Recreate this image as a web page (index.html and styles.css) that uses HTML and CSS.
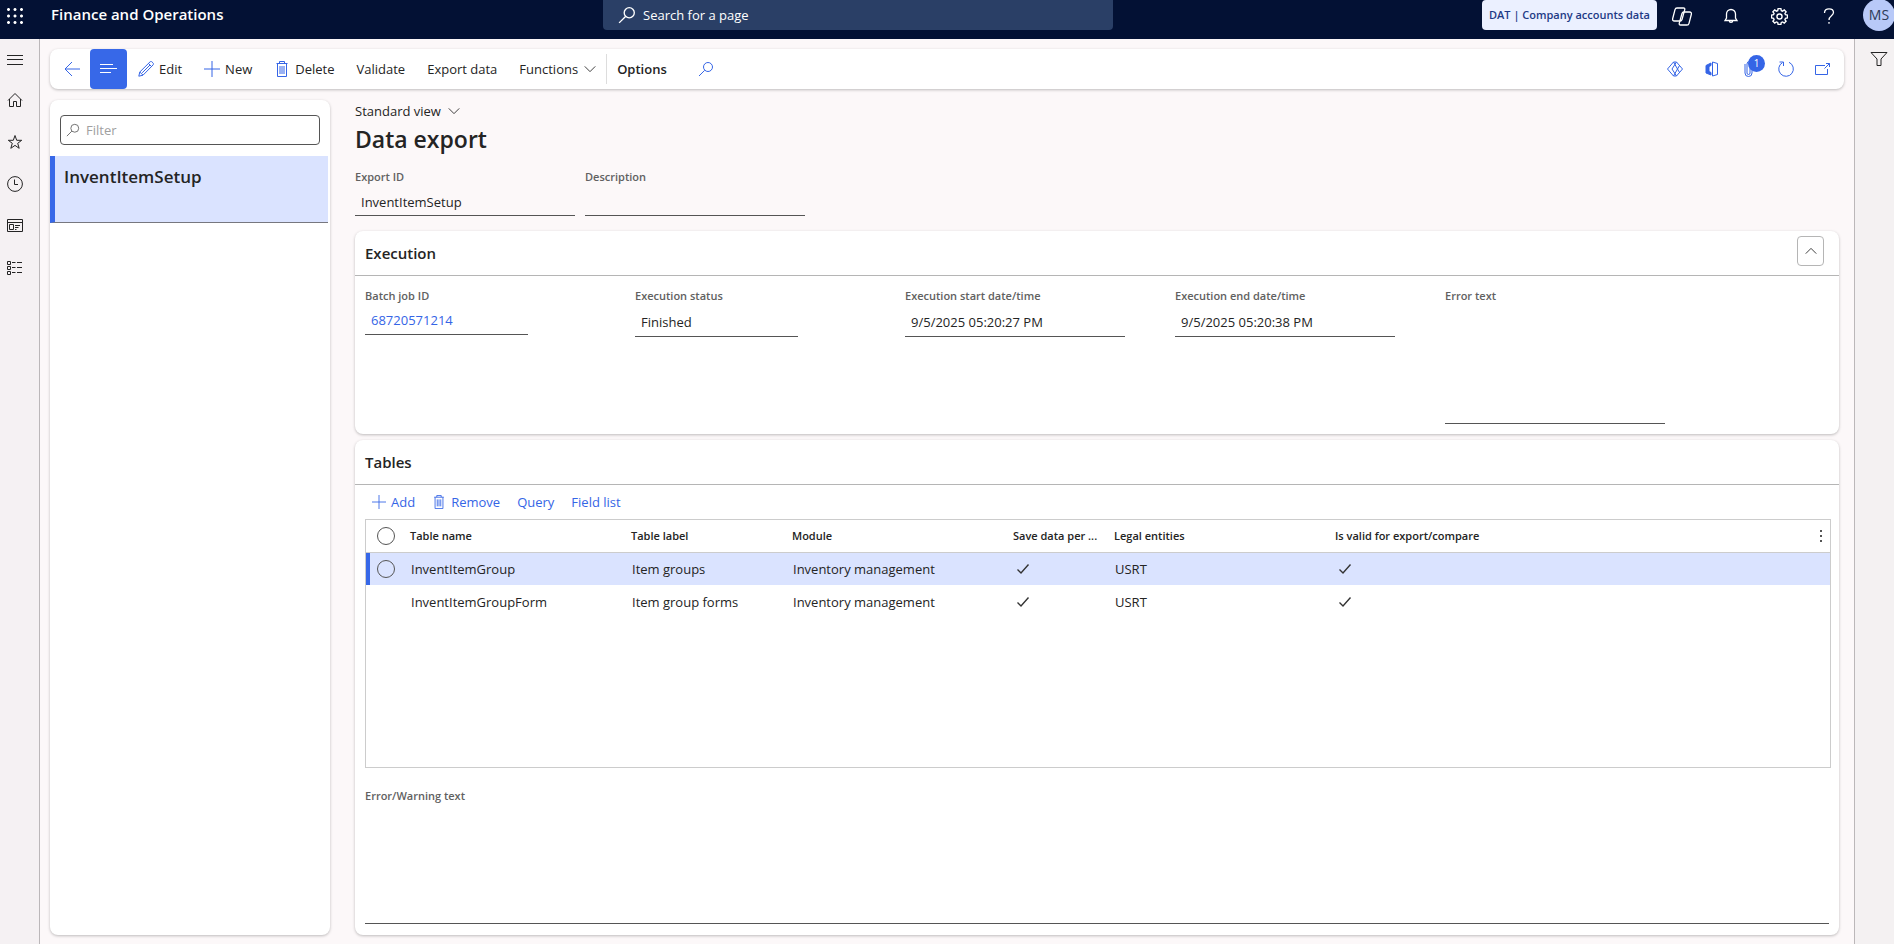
FILE: index.html
```html
<!DOCTYPE html>
<html lang="en">

<head>
    <meta charset="utf-8">
    <meta name="viewport" content="width=device-width, initial-scale=1.0">
    <title>Data export -- Finance and Operations</title>
    <link rel="stylesheet" href="styles.css">
</head>

<body>
    <!-- shared icons -->
    <svg class="defs" width="0" height="0">
        <symbol id="i-search" viewBox="0 0 16 16"><circle cx="10" cy="6" r="4.500"/><path d="M6.700 9.300L1 15"/></symbol>
        <symbol id="i-down" viewBox="0 0 16 16"><path d="M2 5l6 6 6-6"/></symbol>
        <symbol id="i-plus" viewBox="0 0 16 16"><path d="M8 0v16M0 8h16"/></symbol>
        <symbol id="i-trash" viewBox="0 0 16 16"><path d="M2.500 2.500h11M5.500 2.500v-2h5v2M3.500 2.500v13h9v-13M6 5v8M8 5v8M10 5v8"/></symbol>
        <symbol id="i-check" viewBox="0 0 16 16"><path d="M2.500 8.500l3.500 3.500L13.500 3.500"/></symbol>
    </svg>

    <header class="topbar">
        <button class="icon-btn waffle" aria-label="App launcher">
            <svg width="16" height="16" viewBox="0 0 16 16"><path d="M0 1l1-1h1l1 1v1l-1 1H1l-1-1zM6.500 1l1-1h1l1 1v1l-1 1h-1l-1-1zM13 1l1-1h1l1 1v1l-1 1h-1l-1-1zM0 7.500l1-1h1l1 1v1l-1 1H1l-1-1zM6.500 7.500l1-1h1l1 1v1l-1 1h-1l-1-1zM13 7.500l1-1h1l1 1v1l-1 1h-1l-1-1zM0 14l1-1h1l1 1v1l-1 1H1l-1-1zM6.500 14l1-1h1l1 1v1l-1 1h-1l-1-1zM13 14l1-1h1l1 1v1l-1 1h-1l-1-1z"/></svg>
        </button>
        <div class="brand">Finance and Operations</div>
        <label class="search">
            <svg width="18" height="18"><use href="#i-search"/></svg>
            <input type="text" placeholder="Search for a page" aria-label="Search for a page">
        </label>
        <div class="top-actions">
            <button class="company">DAT | Company accounts data</button>
            <button class="icon-btn" aria-label="Copilot">
                <svg class="bold" width="20" height="19" viewBox="0 0 20 19"><path id="leaf" d="M5 1h6.500c1 0 1.500.7 1.200 1.800L10 12.500c-.3 1-1 1.500-2 1.500H2.500C1 14 .3 13 .7 11.500L3 2.700C3.300 1.600 4 1 5 1z"/><use href="#leaf" transform="rotate(180 10 9.500)"/></svg>
            </button>
            <button class="icon-btn" aria-label="Notifications">
                <svg class="bold" width="16" height="16" viewBox="0 0 16 16"><path d="M2 12.500h12l-1.500-2.500V6a4.500 4.500 0 0 0-9 0v4zM6.300 12.700a1.700 1.700 0 0 0 3.400 0"/></svg>
            </button>
            <button class="icon-btn" aria-label="Settings">
                <svg class="bold" width="17" height="17" viewBox="0 0 16 16"><path d="M6.700.6h2.600l.4 1.900 1.200.5 1.600-1.100 1.700 1.700L13.100 5.200l.5 1.100 1.900.4v2.600l-1.900.4-.5 1.200 1.100 1.600-1.700 1.700-1.600-1.100-1.200.5-.4 1.900H6.700l-.4-1.900-1.200-.5-1.600 1.100-1.700-1.700 1.100-1.600-.5-1.200-1.900-.4V6.700l1.900-.4.5-1.100-1.100-1.600 1.700-1.700L5.100 3l1.200-.5z"/><circle cx="8" cy="8" r="2.400"/></svg>
            </button>
            <button class="icon-btn" aria-label="Help">
                <svg class="bold" width="16" height="16" viewBox="0 0 16 16"><path d="M3.500 5C3.500 2.200 5.400.8 8 .8s4.500 1.400 4.500 3.700C12.500 7.800 8 7.800 8 12M8 14v1.800"/></svg>
            </button>
            <button class="avatar">MS</button>
        </div>
    </header>

    <div class="shell">
        <nav class="rail">
            <a href="#" aria-label="Expand navigation"><svg width="16" height="16" viewBox="0 0 16 16"><path d="M0 3.500h16M0 7.500h16M0 12.500h16"/></svg></a>
            <a href="#" aria-label="Home"><svg width="16" height="16" viewBox="0 0 16 16"><path d="M1 8.500l7-7 7 7M2.500 7v7.500h4v-5h3v5h4V7"/></svg></a>
            <a href="#" aria-label="Favorites"><svg width="16" height="16" viewBox="0 0 16 16"><path d="M8 1.500l1.700 4.800h5L10.700 9.300l1.500 5L8 11.400l-4.200 2.900 1.500-5L1.300 6.300h5z"/></svg></a>
            <a href="#" aria-label="Recent"><svg width="16" height="16" viewBox="0 0 16 16"><circle cx="8" cy="8" r="7.400"/><path d="M7.500 3.500v5h3.500"/></svg></a>
            <a href="#" aria-label="Workspaces"><svg width="16" height="16" viewBox="0 0 16 16"><path d="M.500 1.500h15v12H.500zM.500 4.500h15M2.500 6.500h4v5h-4zM8 7.500h5M8 9.500h3.500M8 11.500h1.500"/></svg></a>
            <a href="#" aria-label="Modules"><svg width="16" height="16" viewBox="0 0 16 16"><path d="M.500 1.500h3v3h-3zM.500 6.500h3v3h-3zM.500 11.500h3v3h-3zM5 2.500h3.500M10 2.500h5M5 7.500h3.500M10 7.500h5M5 12.500h3.500M10 12.500h5"/></svg></a>
        </nav>

        <main class="page">
            <div class="toolbar">
                <button class="tool back" aria-label="Back"><svg width="16" height="16" viewBox="0 0 16 16"><path d="M16 8H1M8 1L1 8l7 7"/></svg></button>
                <button class="tool list-toggle" aria-label="Show list"><svg width="17" height="16" viewBox="0 0 17 16"><path d="M0 3.500h13M0 7.500h17M0 11.500h11"/></svg></button>
                <button class="tool"><svg width="16" height="16" viewBox="0 0 16 16"><path d="M.8 15.200l1-4.200L12 .9c.7-.6 1.500-.5 2.100.1l.9.9c.6.600.6 1.400 0 2.100L5 14.200zM1.800 11L5 14.200M10.500 2.500l3 3M12 4L4.200 11.800"/></svg>Edit</button>
                <button class="tool"><svg width="16" height="16"><use href="#i-plus"/></svg>New</button>
                <button class="tool"><svg width="16" height="16"><use href="#i-trash"/></svg>Delete</button>
                <button class="tool">Validate</button>
                <button class="tool">Export data</button>
                <button class="tool menu">Functions<svg width="14" height="14"><use href="#i-down"/></svg></button>
                <button class="tool options">Options</button>
                <button class="tool" aria-label="Search actions"><svg width="16" height="16"><use href="#i-search"/></svg></button>
                <div class="tool-icons">
                    <button class="icon-btn" aria-label="Power Apps"><svg width="16" height="16" viewBox="0 0 16 16"><path d="M.500 8L6.500 1h3l6 7-6 7h-3zM6.500 1l6 10.500M9.500 1L5 8l4.500 7M6.500 15l6-10.500"/></svg></button>
                    <button class="icon-btn" aria-label="Open in Microsoft Office"><svg width="16" height="16" viewBox="0 0 16 16"><path class="solid" d="M2 4.500l5-2.500v2.500L5 5.500v5l2 1V14l-5-2z"/><path d="M8.500 1l5 1.500v11l-5 1.500z"/></svg></button>
                    <button class="icon-btn attach" aria-label="Attachments"><svg width="16" height="16" viewBox="0 0 16 16"><path d="M4 3v9a3.500 3.500 0 0 0 7 0V3a2.500 2.500 0 0 0-5 0v9a1.500 1.500 0 0 0 3 0V4"/></svg><span class="badge">1</span></button>
                    <button class="icon-btn" aria-label="Refresh"><svg width="16" height="16" viewBox="0 0 16 16"><path d="M11 1.300A7.300 7.300 0 1 1 4.500 1.600M1.500 1h4v4"/></svg></button>
                    <button class="icon-btn" aria-label="Open in new window"><svg width="16" height="16" viewBox="0 0 16 16"><path d="M10 4.500H.500v9h12V8M9.500 7.500l5-5M11 2.500h3.500V6"/></svg></button>
                </div>
            </div>

            <div class="columns">
                <aside class="list">
                    <label class="filter">
                        <svg width="14" height="14"><use href="#i-search"/></svg>
                        <input type="text" placeholder="Filter" aria-label="Filter">
                    </label>
                    <a href="#" class="list-item">InventItemSetup</a>
                </aside>

                <section class="detail">
                    <button class="view">Standard view<svg width="14" height="14"><use href="#i-down"/></svg></button>
                    <h1>Data export</h1>
                    <div class="fields head-fields">
                        <div class="field"><label for="export-id">Export ID</label><input id="export-id" value="InventItemSetup" readonly></div>
                        <div class="field"><label for="description">Description</label><input id="description" readonly></div>
                    </div>

                    <div class="card execution">
                        <div class="card-head">
                            <h2>Execution</h2>
                            <button class="collapse" aria-label="Collapse"><svg width="14" height="14" viewBox="0 0 16 16"><path d="M2 11l6-6 6 6"/></svg></button>
                        </div>
                        <div class="fields exec-fields">
                            <div class="field short link"><label for="batch">Batch job ID</label><a id="batch" href="#">68720571214</a></div>
                            <div class="field short"><label for="status">Execution status</label><input id="status" value="Finished" readonly></div>
                            <div class="field"><label for="start">Execution start date/time</label><input id="start" value="9/5/2025 05:20:27 PM" readonly></div>
                            <div class="field"><label for="end">Execution end date/time</label><input id="end" value="9/5/2025 05:20:38 PM" readonly></div>
                            <div class="field"><label for="error">Error text</label><textarea id="error" readonly></textarea></div>
                        </div>
                    </div>

                    <div class="card tables">
                        <div class="card-head">
                            <h2>Tables</h2>
                        </div>
                        <div class="grid-tools">
                            <button><svg width="14" height="14"><use href="#i-plus"/></svg>Add</button>
                            <button><svg width="14" height="14"><use href="#i-trash"/></svg>Remove</button>
                            <button>Query</button>
                            <button>Field list</button>
                        </div>
                        <div class="grid">
                            <table>
                                <colgroup>
                                    <col class="c-mark"><col class="c-name"><col class="c-label"><col class="c-module"><col class="c-save"><col class="c-legal"><col><col class="c-more">
                                </colgroup>
                                <thead>
                                    <tr>
                                        <th><input type="checkbox" aria-label="Select all"></th>
                                        <th>Table name</th>
                                        <th>Table label</th>
                                        <th>Module</th>
                                        <th>Save data per ...</th>
                                        <th>Legal entities</th>
                                        <th>Is valid for export/compare</th>
                                        <th><button class="more" aria-label="Grid options"><svg width="4" height="16" viewBox="0 0 4 16"><path d="M1 2h2v2H1zM1 7h2v2H1zM1 12h2v2H1z"/></svg></button></th>
                                    </tr>
                                </thead>
                                <tbody>
                                    <tr class="selected">
                                        <td><input type="checkbox" aria-label="Select InventItemGroup"></td>
                                        <td>InventItemGroup</td>
                                        <td>Item groups</td>
                                        <td>Inventory management</td>
                                        <td><svg width="16" height="16"><use href="#i-check"/></svg></td>
                                        <td>USRT</td>
                                        <td><svg width="16" height="16"><use href="#i-check"/></svg></td>
                                        <td></td>
                                    </tr>
                                    <tr>
                                        <td></td>
                                        <td>InventItemGroupForm</td>
                                        <td>Item group forms</td>
                                        <td>Inventory management</td>
                                        <td><svg width="16" height="16"><use href="#i-check"/></svg></td>
                                        <td>USRT</td>
                                        <td><svg width="16" height="16"><use href="#i-check"/></svg></td>
                                        <td></td>
                                    </tr>
                                </tbody>
                            </table>
                        </div>
                        <div class="field warning"><label for="warning">Error/Warning text</label><textarea id="warning" readonly></textarea></div>
                    </div>
                </section>
            </div>
        </main>

        <aside class="filter-rail">
            <button class="icon-btn" aria-label="Show filters"><svg width="18" height="16" viewBox="0 0 18 16"><path d="M1 1.500h16l-6 6.500v6.500H7V8z"/></svg></button>
        </aside>
    </div>
</body>

</html>
```
FILE: styles.css
```css
* {
    box-sizing: border-box;
}

body {
    margin: 0;
    padding-right: 8px;
    min-height: 100vh;
    display: flex;
    flex-direction: column;
    background: #fff;
    color: #242424;
    font: 14px/20px "Segoe UI", "Open Sans", "Noto Sans", sans-serif;
}

button, input, textarea {
    margin: 0;
    padding: 0;
    border: 0;
    background: none;
    color: inherit;
    font: inherit;
    outline: none;
}

a {
    color: inherit;
    text-decoration: none;
}

svg {
    flex: none;
    display: block;
    fill: none;
    stroke: currentColor;
}

.bold {
    stroke-width: 1.3;
}

.solid {
    fill: currentColor;
}

.defs {
    position: absolute;
}

.icon-btn {
    display: flex;
    align-items: center;
    justify-content: center;
}

/* top bar */
.topbar {
    height: 39px;
    display: grid;
    grid-template-columns: 51px 552px 510px 1fr;
    align-items: start;
    background: #031134;
    color: #fff;
    overflow: hidden;
}

.waffle {
    width: 30px;
    height: 31px;
}

.waffle svg {
    fill: #fff;
    stroke: none;
}

.brand {
    font-size: 15px;
    font-weight: 600;
    line-height: 28px;
}

.search {
    height: 30px;
    padding: 0 15px;
    display: flex;
    align-items: center;
    gap: 7px;
    background: #2a3f66;
    border-radius: 0 0 4px 4px;
}

.search svg {
    stroke-width: 1.2;
}

.search input {
    flex: 1;
    font-size: 13px;
}

.search input::placeholder {
    color: #fff;
    opacity: 1;
}

.top-actions {
    display: flex;
    justify-content: flex-end;
}

.top-actions .icon-btn {
    width: 49px;
    height: 32px;
}

.company {
    width: 175px;
    height: 30px;
    background: #ebf0ff;
    border-radius: 4px;
    color: #1e3a85;
    font-size: 11px;
    font-weight: 600;
    white-space: nowrap;
}

.avatar {
    width: 32px;
    height: 32px;
    margin: -1px -1px 0 10px;
    border-radius: 50%;
    background: #b8c9f8;
    color: #2c3a57;
}

/* page frame */
.shell {
    flex: 1;
    display: flex;
}

.rail {
    width: 40px;
    background: #f5f1f3;
    border-right: 1px solid #bbb7b9;
}

.rail a {
    width: 30px;
    height: 42px;
    display: flex;
    align-items: center;
    justify-content: center;
}

.rail a:first-child {
    height: 40px;
    padding-top: 2px;
}

.filter-rail {
    width: 40px;
    background: #f4f1f2;
    border-left: 1px solid #bbb7b9;
}

.filter-rail .icon-btn {
    width: 48px;
    height: 40px;
}

.page {
    flex: 1;
    min-width: 0;
    padding: 10px 10px 9px;
    display: flex;
    flex-direction: column;
    gap: 11px;
    background: #fcf8f9;
}

.toolbar, .list, .card {
    background: #fff;
    border-radius: 8px;
    box-shadow: 0 1px 3px rgba(0, 0, 0, .25);
}

/* action pane */
.toolbar {
    height: 40px;
    padding-left: 4px;
    display: flex;
}

.tool {
    padding: 0 11px;
    display: flex;
    align-items: center;
    gap: 5px;
    font-size: 13px;
    white-space: nowrap;
}

.tool svg, .tool-icons {
    color: #3565e6;
}

.back {
    padding: 0 10px;
}

.list-toggle {
    width: 37px;
    padding: 0 10px;
    background: #3768e8;
    border-radius: 4px;
}

.list-toggle svg {
    color: #fff;
}

.menu svg {
    color: #242424;
}

.menu {
    padding-right: 9px;
}

.options {
    margin-right: 9px;
    font-weight: 600;
    background: linear-gradient(#ddd, #ddd) no-repeat left center / 1px 30px;
}

.tool-icons {
    margin-left: auto;
    padding-right: 3px;
    display: flex;
}

.tool-icons .icon-btn {
    width: 37px;
}

.attach {
    position: relative;
}

.badge {
    position: absolute;
    left: 18px;
    top: 6px;
    width: 17px;
    height: 17px;
    border-radius: 50%;
    background: #3565e6;
    color: #fff;
    font-size: 10px;
    line-height: 17px;
}

/* record list */
.columns {
    flex: 1;
    display: flex;
    gap: 25px;
}

.list {
    width: 280px;
}

.filter {
    height: 30px;
    margin: 15px 10px 11px;
    padding: 0 5px;
    display: flex;
    align-items: center;
    gap: 6px;
    border: 1px solid #555;
    border-radius: 4px;
    color: #616161;
}

.filter input {
    flex: 1;
    min-width: 0;
    font-size: 13px;
}

.filter input::placeholder {
    color: #a0a0a0;
    opacity: 1;
}

.list-item {
    display: block;
    height: 67px;
    margin-right: 2px;
    padding: 10px 9px;
    background: #dae3ff;
    border-left: 5px solid #3768e8;
    border-bottom: 1px solid #77777f;
    font-size: 17px;
    font-weight: 600;
    line-height: 22px;
}

/* record detail */
.detail {
    flex: 1;
    min-width: 0;
    margin-right: 5px;
    display: flex;
    flex-direction: column;
}

.view {
    height: 22px;
    display: flex;
    align-items: center;
    gap: 6px;
    font-size: 13px;
}

h1 {
    margin: 2px 0 15px;
    font-size: 23px;
    font-weight: 600;
    line-height: 30px;
}

h2 {
    margin: 0;
    font-size: 15px;
    font-weight: 600;
}

.fields {
    display: flex;
}

.head-fields {
    gap: 10px;
    margin-bottom: 15px;
}

.field {
    width: 220px;
    display: flex;
    flex-direction: column;
}

.field label {
    color: #616161;
    font-size: 11px;
    font-weight: 600;
    line-height: 16px;
}

.field input, .field a, .field textarea {
    height: 31px;
    padding: 4px 6px 0;
    border-bottom: 1px solid #555;
    border-radius: 0;
    font-size: 13px;
    resize: none;
}

.card-head {
    height: 45px;
    padding: 0 15px 0 10px;
    display: flex;
    align-items: center;
    justify-content: space-between;
    border-bottom: 1px solid #b5b5b5;
}

.collapse {
    width: 27px;
    height: 30px;
    margin-bottom: 5px;
    display: flex;
    align-items: center;
    justify-content: center;
    border: 1px solid #b5b5b5;
    border-radius: 4px;
}

.execution {
    height: 203px;
    margin-bottom: 6px;
}

.exec-fields {
    padding: 12px 10px;
    display: grid;
    grid-template-columns: repeat(5, 270px);
    align-items: start;
}

.exec-fields .short {
    width: 163px;
}

.exec-fields .field input {
    height: 33px;
}

.exec-fields textarea {
    height: 120px;
}

.field a {
    padding-top: 6px;
    color: #3565e6;
}

/* tables grid */
.tables {
    flex: 1;
    display: flex;
    flex-direction: column;
}

.grid-tools {
    height: 34px;
    padding-left: 17px;
    display: flex;
    gap: 17px;
    color: #3565e6;
    font-size: 13px;
}

.grid-tools button {
    display: flex;
    align-items: center;
    gap: 5px;
}

.grid {
    height: 249px;
    margin: 0 8px 0 10px;
    border: 1px solid #ccc;
}

table {
    width: 100%;
    table-layout: fixed;
    border-collapse: collapse;
}

.c-mark { width: 43px; }
.c-name { width: 221px; }
.c-label { width: 161px; }
.c-module { width: 221px; }
.c-save { width: 101px; }
.c-legal { width: 221px; }
.c-more { width: 12px; }

th, td {
    height: 33px;
    padding: 0 0 0 2px;
    text-align: left;
    white-space: nowrap;
    font-size: 13px;
}

th {
    height: 32px;
    padding-left: 1px;
    border-bottom: 1px solid #ccc;
    font-size: 11px;
    font-weight: 600;
}

td svg {
    margin-left: 1px;
    color: #333;
    stroke-width: 1.4;
}

.selected {
    background: #dae3ff;
    box-shadow: inset 4px 0 #3768e8;
}

input[type="checkbox"] {
    appearance: none;
    display: block;
    width: 18px;
    height: 18px;
    margin-left: 10px;
    border: 1px solid #555;
    border-radius: 50%;
}

td input[type="checkbox"] {
    margin-left: 9px;
}

.more {
    display: block;
}

.more svg {
    fill: #555;
    stroke: none;
}

.warning {
    width: auto;
    flex: 1;
    margin: 20px 10px 11px;
}

.warning textarea {
    flex: 1;
}
```
